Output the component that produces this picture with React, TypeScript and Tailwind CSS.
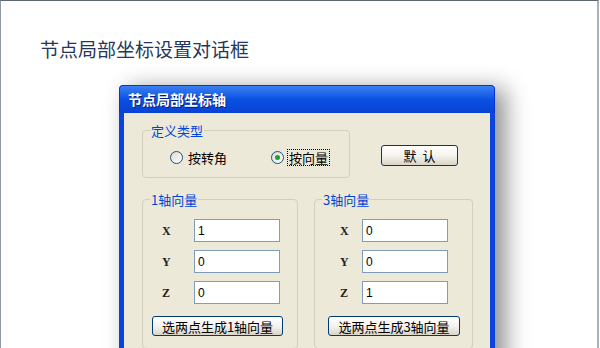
import React from 'react';

const cjk = 'font-["Noto_Sans_CJK_SC",sans-serif]';

function Radio({ label, checked }: { label: string; checked?: boolean }) {
    return (
        <div className="flex items-center">
            <span className="flex h-[13px] w-[13px] items-center justify-center rounded-full border border-[#1c5180] bg-linear-to-br from-[#dcd9d0] to-white">
                {checked && <span className="h-[5px] w-[5px] rounded-full bg-[#21a121]" />}
            </span>
            <span
                className={`ml-[3px] text-[13px] leading-[15px] text-black ${cjk} ${
                    checked ? 'border border-dotted border-black px-[1px]' : 'px-[2px]'
                }`}
            >
                {label}
            </span>
        </div>
    );
}

function XpButton({ children, className }: { children: React.ReactNode; className: string }) {
    return (
        <div
            className={`flex items-center justify-center rounded-[3px] border border-[#003c74] bg-linear-to-b from-white via-[#f4f3ee] to-[#d8d4c8] text-[13px] leading-none text-black ${cjk} ${className}`}
        >
            {children}
        </div>
    );
}

function Field({ value }: { value: string }) {
    return (
        <div className='flex h-[23px] w-[86px] items-center border border-[#7f9db9] bg-white pl-[3px] font-["Liberation_Sans",sans-serif] text-[12px] text-black'>
            {value}
        </div>
    );
}

function AxisGroup({
    title,
    values,
    button,
    width,
    labelW,
    padL,
    btnW,
    btnL,
}: {
    title: string;
    values: string[];
    button: string;
    width: string;
    labelW: string;
    padL: string;
    btnW: string;
    btnL: string;
}) {
    return (
        <fieldset className={`${width} rounded-[4px] border border-[#d0d0bf] pb-[12px]`}>
            <legend className={`ml-[7px] px-[1px] text-[13px] leading-[13px] text-[#0046d5] ${cjk}`}>{title}</legend>
            <div className={`mt-[13px] flex flex-col gap-[8px] ${padL}`}>
                {['X', 'Y', 'Z'].map((axis, i) => (
                    <div key={axis} className="flex items-center">
                        <span className={`${labelW} font-["Liberation_Serif",serif] text-[12px] font-bold text-[#222]`}>{axis}</span>
                        <Field value={values[i]} />
                    </div>
                ))}
            </div>
            <XpButton className={`mt-[12px] h-[20px] ${btnW} ${btnL}`}>{button}</XpButton>
        </fieldset>
    );
}

export default function App() {
    return (
        <div className="h-[348px] w-[599px] overflow-hidden border-t border-l border-r-2 border-t-[#5c6670] border-l-[#8f99a8] border-r-[#a9b0c0] bg-white">
            {/* Slide title */}
            <div className={`pl-[39px] pt-[35px] text-[19px] leading-[26px] text-[#24375a] ${cjk}`}>
                节点局部坐标设置对话框
            </div>

            {/* Dialog */}
            <div className="ml-[118px] mt-[23px] w-[376px] shadow-[10px_4px_22px_rgba(0,0,0,0.45)]">
                <div className="flex h-[28px] items-center rounded-t-[4px] border-x border-t border-[#0831d9] bg-linear-to-b from-[#3b80f3] via-[#0a50e2] to-[#0842d4] pl-[8px]">
                    <span className={`text-[14px] font-bold text-white [text-shadow:1px_1px_0_#0a1e6e] ${cjk}`}>节点局部坐标轴</span>
                </div>
                <div className="h-[260px] border-x-[5px] border-x-[#0b44dc] bg-[#ece9d8] pl-[18px] pr-[16px] pt-[11px]">
                    {/* Definition type */}
                    <div className="flex items-start">
                        <fieldset className="w-[208px] rounded-[4px] border border-[#d0d0bf] pb-[11px]">
                            <legend className={`ml-[7px] px-[1px] text-[13px] leading-[13px] text-[#0046d5] ${cjk}`}>定义类型</legend>
                            <div className="mt-[12px] flex items-center pl-[27px]">
                                <Radio label="按转角" />
                                <div className="ml-[42px]">
                                    <Radio label="按向量" checked />
                                </div>
                            </div>
                        </fieldset>
                        <XpButton className="ml-[31px] mt-[21px] h-[21px] w-[77px]">默&nbsp;&nbsp;认</XpButton>
                    </div>

                    {/* Axis vectors */}
                    <div className="mt-[15px] flex gap-[16px]">
                        <AxisGroup
                            title="1轴向量"
                            values={['1', '0', '0']}
                            button="选两点生成1轴向量"
                            width="w-[156px]"
                            labelW="w-[32px]"
                            padL="pl-[19px]"
                            btnW="w-[131px]"
                            btnL="ml-[9px]"
                        />
                        <AxisGroup
                            title="3轴向量"
                            values={['0', '0', '1']}
                            button="选两点生成3轴向量"
                            width="w-[159px]"
                            labelW="w-[22px]"
                            padL="pl-[25px]"
                            btnW="w-[132px]"
                            btnL="ml-[13px]"
                        />
                    </div>
                </div>
            </div>
        </div>
    );
}
